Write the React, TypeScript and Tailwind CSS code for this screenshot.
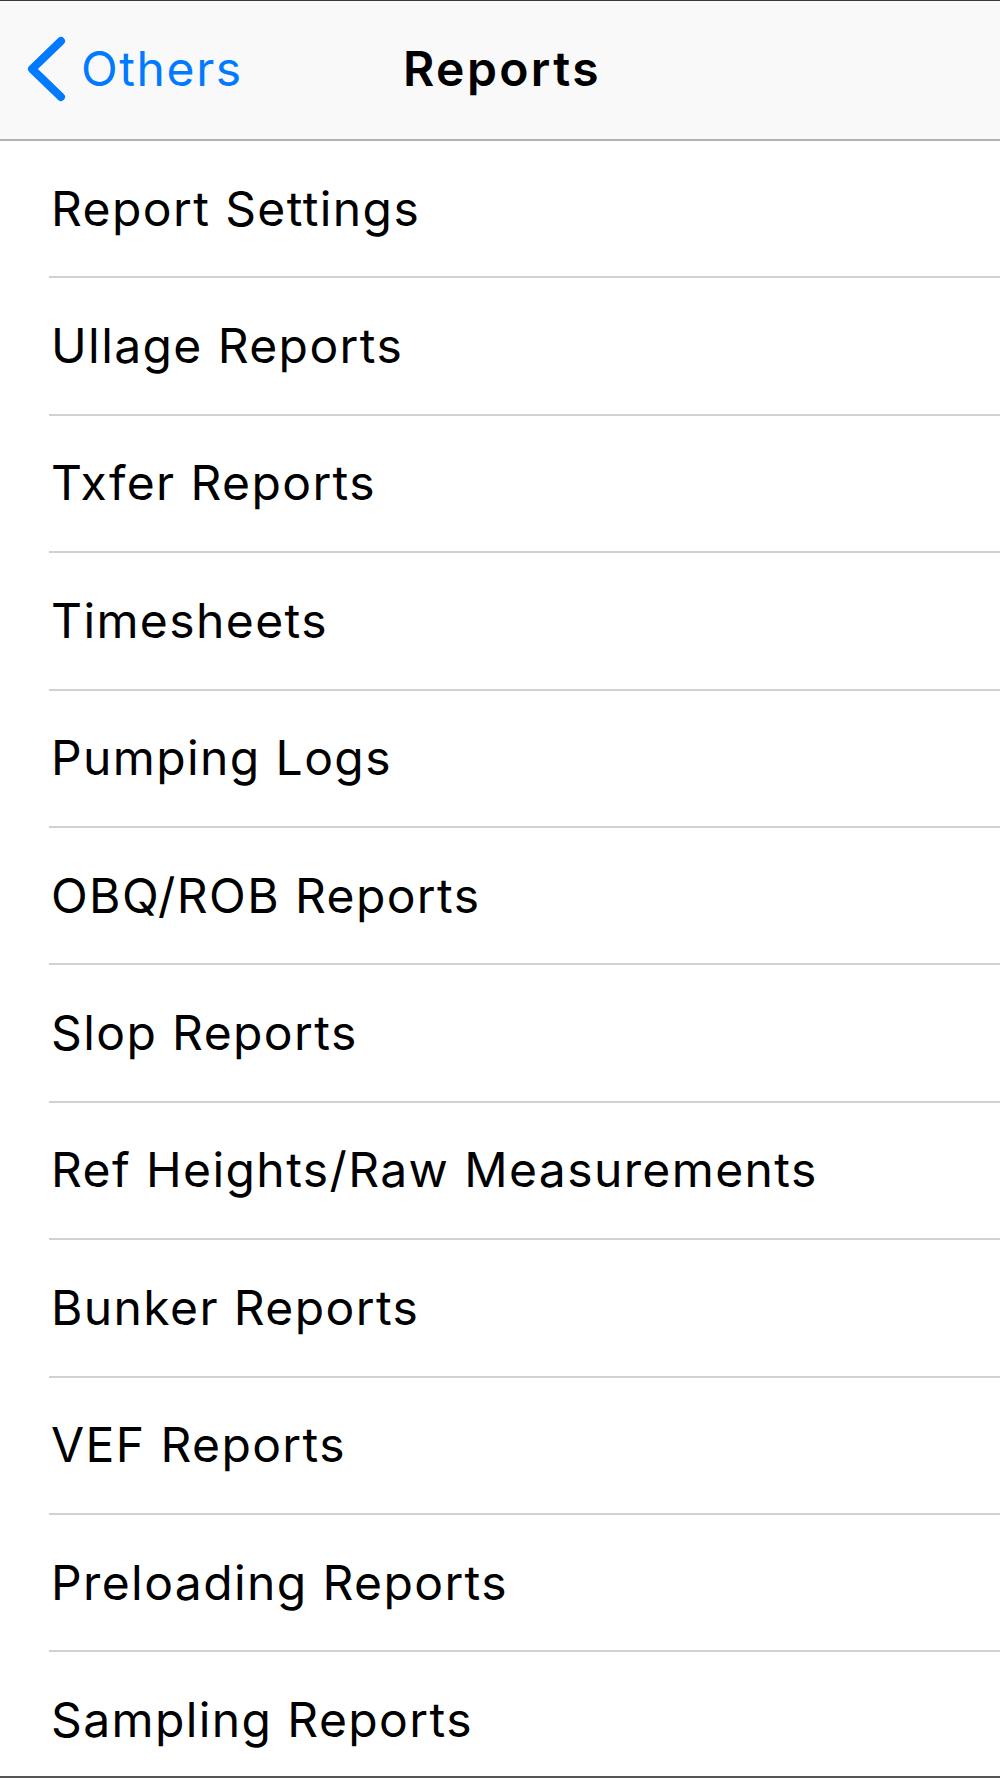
const items = [
  'Report Settings',
  'Ullage Reports',
  'Txfer Reports',
  'Timesheets',
  'Pumping Logs',
  'OBQ/ROB Reports',
  'Slop Reports',
  'Ref Heights/Raw Measurements',
  'Bunker Reports',
  'VEF Reports',
  'Preloading Reports',
  'Sampling Reports',
]

export default function App() {
  return (
    <div
      className="h-[1778px] w-[1000px] overflow-hidden bg-white border-t border-t-[#3a3a3a] border-b-2 border-b-[#555] flex flex-col"
      style={{ fontFamily: 'Inter, "Noto Sans", sans-serif' }}
    >
      {/* Nav bar */}
      <header className="relative h-[140px] shrink-0 bg-[#f9f9f9] border-b-2 border-[#b2b2b2] flex items-center">
        <button className="flex items-center pl-[24px] text-[#007aff]">
          <svg width="44" height="70" viewBox="0 0 44 70" className="mr-[13px] -mt-[2px]">
            <path d="M37 7 L8 35 L37 63" fill="none" stroke="currentColor" strokeWidth="8" strokeLinecap="round" strokeLinejoin="round" />
          </svg>
          <span className="text-[48px] leading-none tracking-[1.6px] -mt-[2px]">Others</span>
        </button>
        <h1 className="absolute left-[403px] top-[44px] text-[48px] font-semibold leading-none tracking-[2.4px] text-black">
          Reports
        </h1>
      </header>

      {/* List */}
      <ul className="flex-1">
        {items.map(label => (
          <li key={label} className="pl-[49px]">
            <div className="h-[137.4px] border-b-2 border-[#d1d0d5] flex items-center pl-[2px] text-[48px] tracking-[1.4px] text-black">
              {label}
            </div>
          </li>
        ))}
      </ul>
    </div>
  )
}
